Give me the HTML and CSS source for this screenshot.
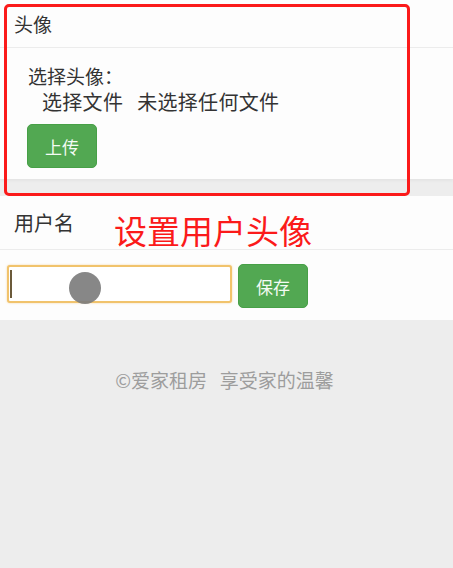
FILE: index.html
```html
<!DOCTYPE html>
<html lang="zh">
<head>
<meta charset="utf-8">
<title>设置</title>
<link rel="stylesheet" href="styles.css">
</head>
<body>
<div class="page">
  <section class="panel panel-avatar">
    <div class="panel-head">头像</div>
    <div class="panel-body">
      <div class="label">选择头像：</div>
      <div class="file-row"><span class="file-btn">选择文件</span><span class="file-name">未选择任何文件</span></div>
      <button class="btn">上传</button>
    </div>
  </section>
  <section class="panel panel-name">
    <div class="panel-head">用户名</div>
    <div class="panel-body row">
      <div class="input"><span class="caret"></span></div>
      <button class="btn btn-save">保存</button>
    </div>
  </section>
  <footer class="footer">©爱家租房&nbsp;&nbsp;&nbsp;享受家的温馨</footer>
</div>
<div class="mark-box"></div>
<div class="mark-text">设置用户头像</div>
<div class="touch"></div>
</body>
</html>
```
FILE: styles.css
```css
html, body {
  margin: 0;
  padding: 0;
  background: #ededed;
  font-family: "Noto Sans CJK SC", "Noto Sans", sans-serif;
  color: #333;
}
.page {
  display: flex;
  flex-direction: column;
  min-height: 568px;
}
.panel {
  background: #fdfdfd;
}
.panel-avatar {
  margin-bottom: 17px;
  box-shadow: 0 2px 3px rgba(0,0,0,0.04);
}
.panel-head {
  height: 48px;
  box-sizing: border-box;
  display: flex;
  align-items: center;
  padding-left: 14px;
  font-size: 19px;
  border-bottom: 1px solid #ececec;
}
.panel-name .panel-head {
  height: 54px;
  font-size: 20px;
}
.panel-avatar .panel-body {
  padding: 18px 0 11px 28px;
  display: flex;
  flex-direction: column;
  align-items: flex-start;
}
.label,
.file-row {
  font-family: "Liberation Sans", "Noto Sans CJK SC", sans-serif;
}
.label {
  font-size: 19px;
  line-height: 24px;
}
.file-row {
  font-size: 20px;
  line-height: 26px;
  padding-left: 14px;
  letter-spacing: 0.3px;
}
.file-name {
  margin-left: 14px;
}
.btn {
  font-family: inherit;
  width: 70px;
  height: 44px;
  margin-top: 8px;
  margin-left: -1px;
  border: 1px solid #47a047;
  border-radius: 5px;
  background: #52a852;
  color: #f4fbf4;
  font-size: 17px;
  padding: 0;
}
.row {
  display: flex;
  align-items: flex-start;
  gap: 6px;
  padding: 14px 0 12px 7px;
}
.input {
  width: 225px;
  height: 38px;
  margin-top: 1px;
  box-sizing: border-box;
  border: 2px solid #f1c36c;
  border-radius: 3px;
  background: #fff;
  box-shadow: 0 0 2px rgba(240,180,80,0.6);
  display: flex;
  align-items: center;
  padding-left: 1px;
}
.caret {
  width: 2px;
  height: 28px;
  background: #6b5a3a;
}
.btn-save {
  margin: 0;
}
.footer {
  text-align: center;
  color: #9d9d9d;
  font-size: 19px;
  line-height: 26px;
  padding-top: 47px;
  padding-right: 4px;
}
.mark-box {
  position: absolute;
  left: 4px;
  top: 4px;
  width: 406px;
  height: 192px;
  box-sizing: border-box;
  border: 3px solid #fb1a1a;
  border-radius: 5px;
}
.mark-text {
  position: absolute;
  left: 114px;
  top: 210px;
  font-size: 33px;
  line-height: 40px;
  color: #fb1a1a;
}
.touch {
  position: absolute;
  left: 69px;
  top: 272px;
  width: 32px;
  height: 32px;
  border-radius: 50%;
  background: rgba(125,125,125,0.92);
}
```
